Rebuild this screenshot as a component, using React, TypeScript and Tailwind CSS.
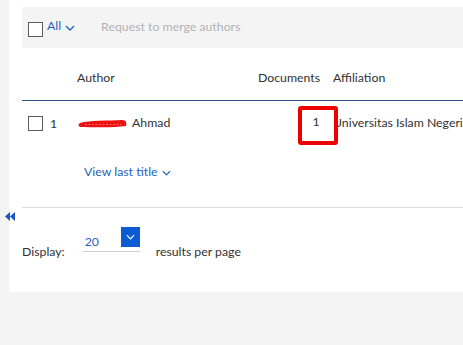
import React from 'react';

const font = { fontFamily: 'Lato, "Open Sans", sans-serif' };

function Checkbox() {
  return <span className="block w-[15px] h-[15px] border-[1.5px] border-[#5c5c5c] bg-white shrink-0" />;
}

function Chevron({ className }: { className?: string }) {
  return (
    <svg viewBox="0 0 10 6" className={className} fill="none" stroke="currentColor" strokeWidth="1.3">
      <path d="M1 1l4 4 4-4" />
    </svg>
  );
}

export default function App() {
  return (
    <div className="relative w-[463px] h-[345px] overflow-hidden bg-[#f4f4f4] text-[12.3px] text-[#323232]" style={font}>
      {/* collapse handle */}
      <svg viewBox="0 0 10 9" className="absolute left-[5px] top-[212px] w-[10px] h-[9px] text-[#1557c7]" fill="currentColor">
        <path d="M5 0v9L0 4.5z" />
        <path d="M10 0v9L5 4.5z" />
      </svg>

      <div className="ml-[9px] h-[292px] bg-white pl-[13px] pt-[7px]">
        {/* toolbar */}
        <div className="h-[41px] bg-[#f4f4f4] flex items-center pl-[6px]">
          <span className="mt-[4px]"><Checkbox /></span>
          <span className="ml-[4px] -mt-[2px] flex items-center gap-[4px] text-[#1f5fbf]">
            All
            <Chevron className="w-[10px] h-[6px] mt-[3px]" />
          </span>
          <span className="ml-[26px] text-[#b3b3b3]">Request to merge authors</span>
        </div>

        {/* header */}
        <div className="h-[53px] flex items-center pt-[9px] border-b-[1.5px] border-[#2a568f]">
          <span className="w-[55px] shrink-0" />
          <span className="w-[181px] shrink-0">Author</span>
          <span className="w-[75px] shrink-0">Documents</span>
          <span className="shrink-0">Affiliation</span>
        </div>

        {/* row */}
        <div className="border-b border-[#dcdcdc]">
          <div className="relative h-[45px] flex items-center">
            <span className="w-[55px] shrink-0 flex items-center pl-[6px]">
              <Checkbox />
              <span className="ml-[7px] mt-[2px]">1</span>
            </span>
            <span className="w-[181px] shrink-0 flex items-center">
              <svg viewBox="0 0 52 12" className="w-[52px] h-[12px]">
                <path d="M3 5 C12 2, 32 3, 45 2 C49 2, 50 5, 49 8 C36 10, 14 9, 3 9 C1 8, 1 6, 3 5z" fill="#ee1111" />
                <path d="M8 6.5 H44" stroke="#ff8080" strokeWidth="0.8" strokeDasharray="2 1.5" />
              </svg>
              <span className="ml-[3px] -mt-[1px]">Ahmad</span>
            </span>
            <span className="w-[75px] shrink-0" />
            <span className="shrink-0 whitespace-nowrap">Universitas Islam Negeri</span>
            <span className="absolute left-[276px] top-[5px] w-[40px] h-[39px] border-[4px] border-[#ee0000] rounded-[3px] bg-white flex items-center justify-center">
              <span className="-mt-[6px] -ml-[4px]">1</span>
            </span>
          </div>
          <div className="h-[48px] flex items-center pl-[62px] pt-[4px] text-[#2563b8]">
            View last title
            <Chevron className="w-[9px] h-[6px] ml-[4px] mt-[1px]" />
          </div>
          <div className="h-[13px]" />
        </div>

        {/* display */}
        <div className="flex items-start pt-[19px]">
          <span className="mt-[17px] leading-[16px]">Display:</span>
          <div className="relative ml-[18px] w-[57px] h-[25px] border-b border-[#d0d0d0] flex items-end pb-[2px] pl-[2px] leading-[14px] text-[#1f5fbf]">
            20
            <span className="absolute right-0 top-0 w-[19px] h-[20px] bg-[#0b5bd3] flex items-center justify-center text-white">
              <Chevron className="w-[9px] h-[6px]" />
            </span>
          </div>
          <span className="ml-[16px] mt-[17px] leading-[16px]">results per page</span>
        </div>
      </div>
    </div>
  );
}
